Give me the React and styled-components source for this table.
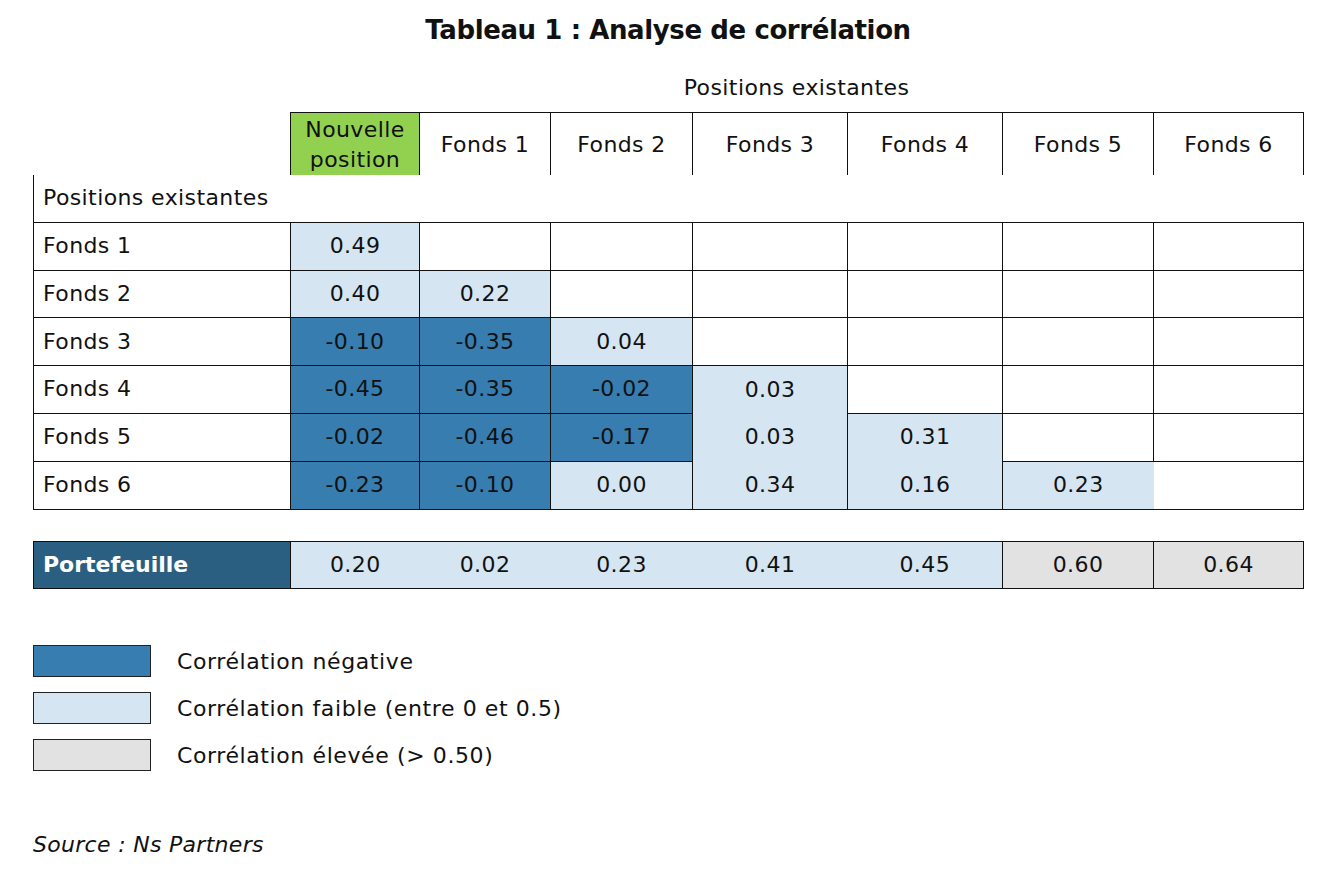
import React from 'react';
import styled, { createGlobalStyle } from 'styled-components';

const GlobalStyle = createGlobalStyle`
  body {
    margin: 0;
    background: #ffffff;
    font-family: "DejaVu Sans", "Liberation Sans", sans-serif;
    color: #111111;
  }
`;

const fills = {
  light: '#d5e5f1',
  dark: '#377daf',
  green: '#92d050',
  gray: '#e2e2e2',
  navy: '#2a5f82',
};

const Page = styled.div`
  width: 1326px;
  padding: 0 0 0 33px;
  box-sizing: border-box;
`;

const Title = styled.h1`
  margin: 0;
  height: 60px;
  line-height: 60px;
  font-size: 26px;
  font-weight: bold;
  text-align: center;
  width: 1270px;
  letter-spacing: -0.4px;
`;

const TopCaption = styled.div`
  height: 52px;
  line-height: 56px;
  font-size: 22px;
  letter-spacing: 0.4px;
  padding-left: 257px;
  text-align: center;
  width: 1270px;
  box-sizing: border-box;
`;

const Table = styled.table`
  width: 1270px;
  border-collapse: collapse;
  table-layout: fixed;
  font-size: 22px;
  letter-spacing: 0.4px;
  margin-top: ${(p) => p.$gap || 0}px;
`;

const Cell = styled.td`
  border: 1px solid #111111;
  height: ${(p) => p.$h || 46.8}px;
  padding: 0;
  text-align: ${(p) => (p.$label ? 'left' : 'center')};
  padding-left: ${(p) => (p.$label ? '9px' : '0')};
  padding-top: ${(p) => (p.$h ? '2px' : '0')};
  background: ${(p) => (p.$fill ? fills[p.$fill] : '#ffffff')};
  color: ${(p) => (p.$fill === 'navy' ? '#ffffff' : '#111111')};
  font-weight: ${(p) => (p.$bold ? 'bold' : 'normal')};
  letter-spacing: ${(p) => (p.$bold ? '0' : '0.4px')};
  line-height: ${(p) => (p.$h ? '30px' : '1.2')};
  border-top-style: ${(p) => (p.$noTop ? 'hidden' : 'solid')};
  border-left-style: ${(p) => (p.$noLeft ? 'hidden' : 'solid')};
  border-right-style: ${(p) => (p.$noRight ? 'hidden' : 'solid')};
  border-bottom-style: ${(p) => (p.$noBottom ? 'hidden' : 'solid')};
`;

const Legend = styled.div`
  margin-top: 56px;
  display: flex;
  flex-direction: column;
  gap: 15px;
`;

const LegendRow = styled.div`
  display: flex;
  align-items: center;
  gap: 26px;
  font-size: 22px;
  letter-spacing: 0.6px;
`;

const Swatch = styled.div`
  width: 118px;
  height: 32px;
  box-sizing: border-box;
  border: 1px solid #222222;
  background: ${(p) => fills[p.$fill]};
`;

const Source = styled.div`
  margin-top: 61px;
  font-size: 22px;
  font-style: italic;
  letter-spacing: 0.3px;
`;

const widths = [257, 129, 131, 142, 155, 155, 151, 150];
const heads = ['Fonds 1', 'Fonds 2', 'Fonds 3', 'Fonds 4', 'Fonds 5', 'Fonds 6'];

// each row: [value, fill] per column
const rows = [
  { name: 'Fonds 1', cells: [['0.49', 'light']] },
  { name: 'Fonds 2', cells: [['0.40', 'light'], ['0.22', 'light']] },
  { name: 'Fonds 3', cells: [['-0.10', 'dark'], ['-0.35', 'dark'], ['0.04', 'light']] },
  { name: 'Fonds 4', cells: [['-0.45', 'dark'], ['-0.35', 'dark'], ['-0.02', 'dark'], ['0.03', 'light']] },
  { name: 'Fonds 5', cells: [['-0.02', 'dark'], ['-0.46', 'dark'], ['-0.17', 'dark'], ['0.03', 'light'], ['0.31', 'light']] },
  { name: 'Fonds 6', cells: [['-0.23', 'dark'], ['-0.10', 'dark'], ['0.00', 'light'], ['0.34', 'light'], ['0.16', 'light'], ['0.23', 'light']] },
];

// merged light areas: hidden borders [row, col]
const hiddenTop = { '4-3': true, '5-3': true, '5-4': true };
const hiddenLeft = { '5-6': true };

const portfolio = [
  ['0.20', 'light'], ['0.02', 'light'], ['0.23', 'light'], ['0.41', 'light'],
  ['0.45', 'light'], ['0.60', 'gray'], ['0.64', 'gray'],
];

const Cols = () => (
  <colgroup>
    {widths.map((w, i) => (
      <col key={i} style={{ width: w }} />
    ))}
  </colgroup>
);

export default function App() {
  return (
    <Page>
      <GlobalStyle />
      <Title>Tableau 1 : Analyse de corrélation</Title>
      <TopCaption>Positions existantes</TopCaption>

      <Table>
        <Cols />
        <tbody>
          <tr>
            <Cell $h={60} $noTop $noLeft $noBottom />
            <Cell $h={60} $fill="green">Nouvelle<br />position</Cell>
            {heads.map((h) => (
              <Cell key={h} $h={60}>{h}</Cell>
            ))}
          </tr>
          <tr>
            <Cell colSpan={8} $label $noTop $noRight>Positions existantes</Cell>
          </tr>
          {rows.map((r, ri) => (
            <tr key={r.name}>
              <Cell $label>{r.name}</Cell>
              {Array.from({ length: 7 }).map((_, ci) => {
                const c = r.cells[ci];
                const key = `${ri}-${ci}`;
                return (
                  <Cell
                    key={ci}
                    $fill={c ? c[1] : null}
                    $noTop={hiddenTop[key]}
                    $noLeft={hiddenLeft[key]}
                  >
                    {c ? c[0] : ''}
                  </Cell>
                );
              })}
            </tr>
          ))}
        </tbody>
      </Table>

      <Table $gap={31}>
        <Cols />
        <tbody>
          <tr>
            <Cell $label $bold $fill="navy">Portefeuille</Cell>
            {portfolio.map(([v, f], i) => (
              <Cell key={i} $fill={f} $noLeft={i > 0 && i < 5}>{v}</Cell>
            ))}
          </tr>
        </tbody>
      </Table>

      <Legend>
        <LegendRow><Swatch $fill="dark" />Corrélation négative</LegendRow>
        <LegendRow><Swatch $fill="light" />Corrélation faible (entre 0 et 0.5)</LegendRow>
        <LegendRow><Swatch $fill="gray" />Corrélation élevée (&gt; 0.50)</LegendRow>
      </Legend>

      <Source>Source : Ns Partners</Source>
    </Page>
  );
}
